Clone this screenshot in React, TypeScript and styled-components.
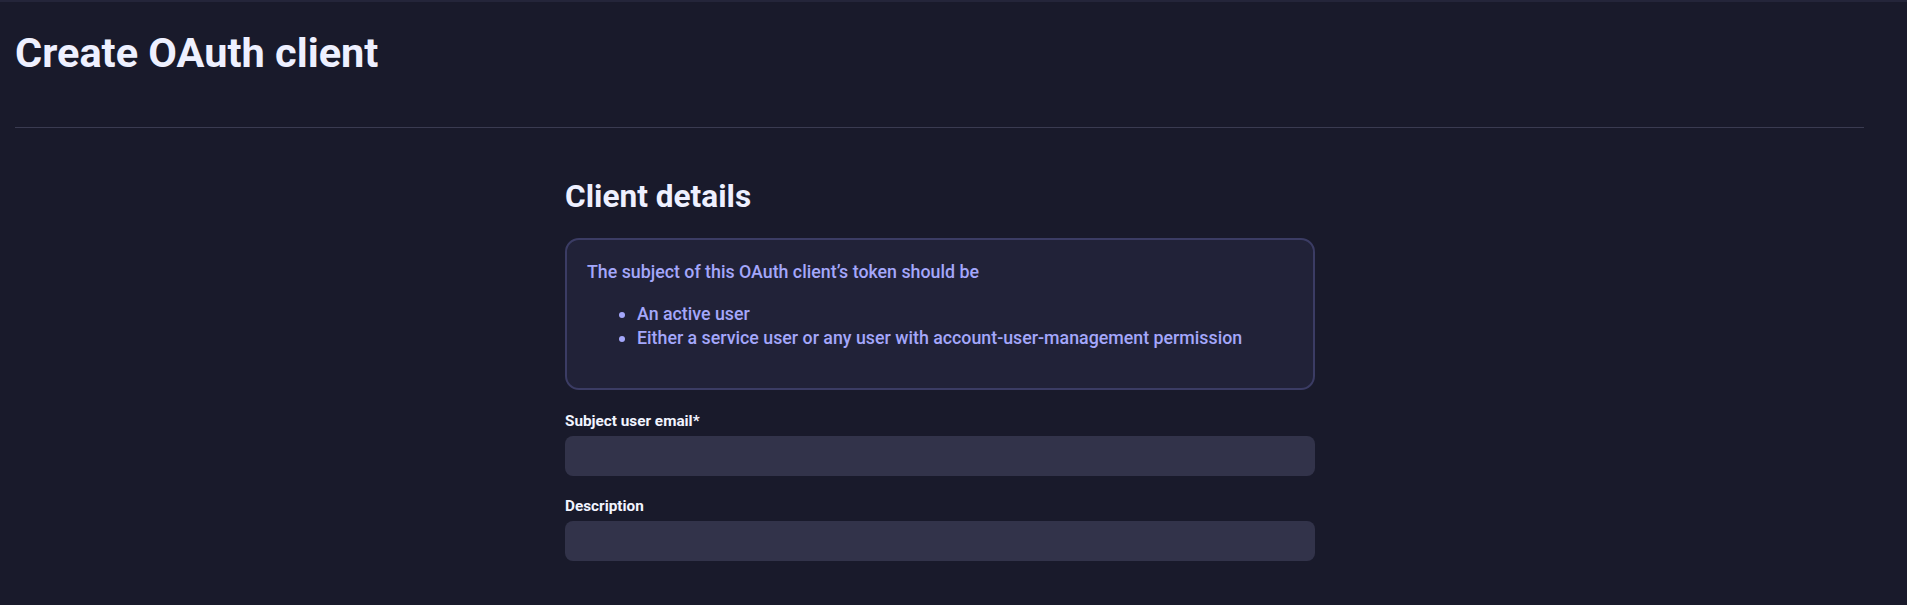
import React from "react";
import styled, { createGlobalStyle } from "styled-components";

const GlobalStyle = createGlobalStyle`
  html, body {
    margin: 0;
    padding: 0;
    background: #191a2b;
  }
  body {
    font-family: Roboto, "Noto Sans", "Liberation Sans", sans-serif;
    color: #eef0ff;
  }
  * { box-sizing: border-box; }
`;

const Page = styled.div`
  min-height: 605px;
  background: #191a2b;
  border-top: 2px solid #24253a;
  padding-right: 27px;
`;

const Header = styled.header`
  padding: 27px 16px 0 15px;
`;

const Title = styled.h1`
  margin: 0;
  font-size: 41.5px;
  line-height: 48px;
  font-weight: 700;
  color: #eef0ff;
  letter-spacing: 0;
`;

const Divider = styled.hr`
  margin: 50px 0 0;
  border: none;
  height: 1px;
  background: #3a3b51;
`;

const Main = styled.main`
  display: flex;
  flex-direction: column;
  align-items: center;
  padding-top: 49px;
`;

const Column = styled.section`
  width: 750px;
  display: flex;
  flex-direction: column;
`;

const SectionTitle = styled.h2`
  margin: 0 0 21px;
  font-size: 31.6px;
  line-height: 40px;
  font-weight: 700;
  color: #eef0ff;
`;

const InfoBox = styled.div`
  background: #212238;
  border: 2px solid #3b3c64;
  border-radius: 14px;
  padding: 20px 20px 22px;
  color: #a4a7fb;
  font-size: 17.8px;
  line-height: 24px;
  font-weight: 500;
`;

const InfoText = styled.p`
  margin: 0 0 18px;
`;

const InfoList = styled.ul`
  margin: 0 0 16px;
  padding-left: 50px;
`;

const Field = styled.div<{ $gap?: number }>`
  display: flex;
  flex-direction: column;
  gap: 5px;
  margin-top: ${(p) => p.$gap ?? 20}px;
`;

const Label = styled.label`
  font-size: 15.3px;
  line-height: 20px;
  font-weight: 700;
  color: #f2f4ff;
`;

const Input = styled.input`
  height: 40px;
  width: 100%;
  border: none;
  outline: none;
  border-radius: 8px;
  background: #32334a;
  color: #f2f4ff;
  padding: 0 12px;
  font-family: inherit;
  font-size: 15px;
`;

export default function App() {
  return (
    <Page>
      <GlobalStyle />
      <Header>
        <Title>Create OAuth client</Title>
        <Divider />
      </Header>
      <Main>
        <Column>
          <SectionTitle>Client details</SectionTitle>
          <InfoBox>
            <InfoText>The subject of this OAuth client’s token should be</InfoText>
            <InfoList>
              <li>An active user</li>
              <li>Either a service user or any user with account-user-management permission</li>
            </InfoList>
          </InfoBox>
          <Field $gap={21}>
            <Label htmlFor="email">Subject user email*</Label>
            <Input id="email" />
          </Field>
          <Field $gap={20}>
            <Label htmlFor="desc">Description</Label>
            <Input id="desc" />
          </Field>
        </Column>
      </Main>
    </Page>
  );
}
